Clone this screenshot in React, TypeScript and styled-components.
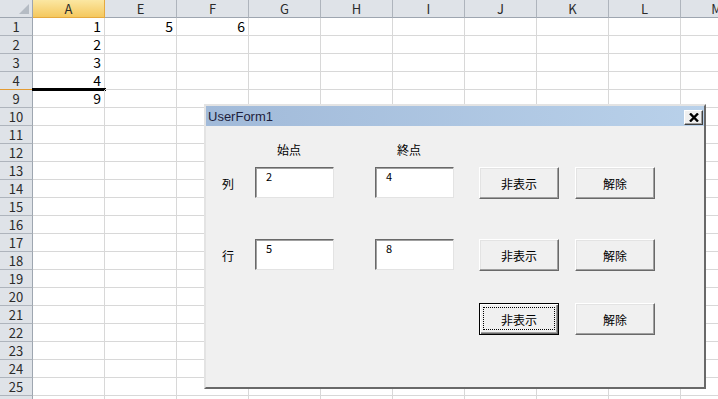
import * as React from 'react';
import styled, { createGlobalStyle, css } from 'styled-components';

const GlobalStyle = createGlobalStyle`
    html, body {
        margin: 0;
        padding: 0;
        width: 718px;
        height: 399px;
        overflow: hidden;
        background: #ffffff;
    }
    body {
        font-family: "Noto Sans CJK JP", "Liberation Sans", sans-serif;
    }
`;

const PageHtml = styled.div`
    position: relative;
    width: 718px;
    height: 399px;
    overflow: hidden;
`;

const SheetHtml = styled.div`
    display: grid;
    grid-template-columns: 33px repeat(10, 72px);
    grid-auto-rows: 18px;
    width: max-content;
    font-size: 13px;
`;

const CornerHtml = styled.div`
    position: relative;
    background: #dfe3e8;
    border-right: 1px solid #9ea6b0;
    border-bottom: 1px solid #9ea6b0;
    &::after {
        content: '';
        position: absolute;
        right: 3px;
        bottom: 3px;
        width: 0;
        height: 0;
        border-left: 10px solid transparent;
        border-bottom: 10px solid #b5bcc4;
    }
`;

const ColumnHeadHtml = styled.div<{ $selected?: boolean }>`
    display: flex;
    align-items: center;
    justify-content: center;
    overflow: hidden;
    color: #2b2b2b;
    background: #dfe3e8;
    border-right: 1px solid #aeb4bc;
    border-bottom: 1px solid #9ea6b0;
    line-height: 17px;
    ${p => p.$selected && css`
        background: linear-gradient(#fbe7a2, #f5c85e);
        border-right-color: #e5a93f;
        border-bottom-color: #e5a93f;
    `}
`;

const RowHeadHtml = styled.div<{ $mark?: boolean }>`
    display: flex;
    align-items: center;
    justify-content: center;
    overflow: hidden;
    color: #2b2b2b;
    background: #dfe3e8;
    border-right: 1px solid #9ea6b0;
    border-bottom: 1px solid ${p => p.$mark ? '#e39b32' : '#aeb4bc'};
    line-height: 17px;
`;

const CellHtml = styled.div<{ $selectEdge?: boolean }>`
    position: relative;
    border-right: 1px solid #d8d8d8;
    border-bottom: 1px solid #d8d8d8;
    text-align: right;
    padding-right: 3px;
    font-size: 14px;
    line-height: 17px;
    color: #000;
    ${p => p.$selectEdge && css`
        &::after {
            content: '';
            position: absolute;
            left: -1px;
            right: -2px;
            bottom: -2px;
            height: 3px;
            background: #000;
        }
    `}
`;

/* ---------- user form ---------- */

const WindowHtml = styled.div`
    position: absolute;
    left: 204px;
    top: 104px;
    width: 502px;
    height: 285px;
    box-sizing: border-box;
    display: flex;
    flex-direction: column;
    background: #f0f0f0;
    border: 2px solid;
    border-color: #e3e3e3 #696969 #696969 #e3e3e3;
`;

const TitleBarHtml = styled.div`
    display: flex;
    align-items: center;
    justify-content: space-between;
    height: 20px;
    padding: 0 1px 0 2px;
    background: linear-gradient(to right, #a1bad9, #b9d1ea);
    color: #1e1e3c;
    font-family: "Liberation Sans", "Noto Sans CJK JP", sans-serif;
    font-size: 13px;
`;

const CloseButtonHtml = styled.div`
    display: flex;
    align-items: center;
    justify-content: center;
    width: 19px;
    height: 15px;
    margin-top: 2px;
    box-sizing: border-box;
    background: #f0f0f0;
    border: 1px solid;
    border-color: #ffffff #404040 #404040 #ffffff;
    box-shadow: inset -1px -1px 0 #a0a0a0;
`;

const FormBodyHtml = styled.div`
    display: flex;
    flex-direction: column;
    padding: 14px 0 0 16px;
    font-size: 12px;
    color: #000;
`;

const FormRowHtml = styled.div<{ $top: number, $height: number }>`
    display: grid;
    grid-template-columns: 33px 79px 41px 79px 25px 80px 16px 80px;
    height: ${p => p.$height}px;
    margin-top: ${p => p.$top}px;
    align-items: center;
`;

const CaptionHtml = styled.div<{ $col: number }>`
    grid-column: ${p => p.$col};
    padding-left: 22px;
    white-space: nowrap;
`;

const RowLabelHtml = styled.div`
    grid-column: 1;
`;

const TextBoxHtml = styled.div<{ $col: number }>`
    grid-column: ${p => p.$col};
    align-self: start;
    height: 31px;
    box-sizing: border-box;
    padding: 1px 0 0 10px;
    background: #ffffff;
    border: 1px solid;
    border-color: #696969 #e3e3e3 #e3e3e3 #696969;
    box-shadow: inset 1px 1px 0 #a0a0a0;
    font-size: 11px;
    line-height: 14px;
`;

const ButtonHtml = styled.div<{ $col: number, $focused?: boolean }>`
    position: relative;
    grid-column: ${p => p.$col};
    height: 32px;
    box-sizing: border-box;
    display: flex;
    align-items: center;
    justify-content: center;
    background: #f0f0f0;
    border: 1px solid;
    border-color: #ffffff #696969 #696969 #ffffff;
    box-shadow: inset -1px -1px 0 #a0a0a0, inset 1px 1px 0 #e3e3e3;
    ${p => p.$focused && css`
        border-color: #000;
        box-shadow: inset 1px 1px 0 #ffffff, inset -1px -1px 0 #696969, inset -2px -2px 0 #a0a0a0;
        &::after {
            content: '';
            position: absolute;
            left: 3px;
            right: 3px;
            top: 3px;
            bottom: 4px;
            border: 1px dotted #000;
        }
    `}
`;

const columns = ['A', 'E', 'F', 'G', 'H', 'I', 'J', 'K', 'L', 'M'];
const rows = [1, 2, 3, 4, 9, 10, 11, 12, 13, 14, 15, 16, 17, 18, 19, 20, 21, 22, 23, 24, 25, 26];

const values : Record<string, string> = {
    A1: '1', A2: '2', A3: '3', A4: '4', A9: '9', E1: '5', F1: '6',
};

function Sheet()
{
    return (
        <SheetHtml>
            <CornerHtml />
            {columns.map(c => <ColumnHeadHtml key={c} $selected={c === 'A'}>{c}</ColumnHeadHtml>)}
            {rows.map(r => (
                <React.Fragment key={r}>
                    <RowHeadHtml $mark={r === 4}>{r}</RowHeadHtml>
                    {columns.map(c => (
                        <CellHtml key={c} $selectEdge={c === 'A' && r === 4}>
                            {values[c + r] ?? ''}
                        </CellHtml>
                    ))}
                </React.Fragment>
            ))}
        </SheetHtml>
    );
}

function UserForm()
{
    return (
        <WindowHtml>
            <TitleBarHtml>
                <span>UserForm1</span>
                <CloseButtonHtml>
                    <svg width="10" height="9" viewBox="0 0 10 9">
                        <path d="M1 0.5 L9 8.5 M9 0.5 L1 8.5" stroke="#000" strokeWidth="2.4" />
                    </svg>
                </CloseButtonHtml>
            </TitleBarHtml>
            <FormBodyHtml>
                <FormRowHtml $top={0} $height={18}>
                    <CaptionHtml $col={2}>始点</CaptionHtml>
                    <CaptionHtml $col={4}>終点</CaptionHtml>
                </FormRowHtml>
                <FormRowHtml $top={9} $height={32}>
                    <RowLabelHtml>列</RowLabelHtml>
                    <TextBoxHtml $col={2}>2</TextBoxHtml>
                    <TextBoxHtml $col={4}>4</TextBoxHtml>
                    <ButtonHtml $col={6}>非表示</ButtonHtml>
                    <ButtonHtml $col={8}>解除</ButtonHtml>
                </FormRowHtml>
                <FormRowHtml $top={40} $height={32}>
                    <RowLabelHtml>行</RowLabelHtml>
                    <TextBoxHtml $col={2}>5</TextBoxHtml>
                    <TextBoxHtml $col={4}>8</TextBoxHtml>
                    <ButtonHtml $col={6}>非表示</ButtonHtml>
                    <ButtonHtml $col={8}>解除</ButtonHtml>
                </FormRowHtml>
                <FormRowHtml $top={32} $height={32}>
                    <ButtonHtml $col={6} $focused>非表示</ButtonHtml>
                    <ButtonHtml $col={8}>解除</ButtonHtml>
                </FormRowHtml>
            </FormBodyHtml>
        </WindowHtml>
    );
}

export default function App()
{
    return (
        <PageHtml>
            <GlobalStyle />
            <Sheet />
            <UserForm />
        </PageHtml>
    );
}
